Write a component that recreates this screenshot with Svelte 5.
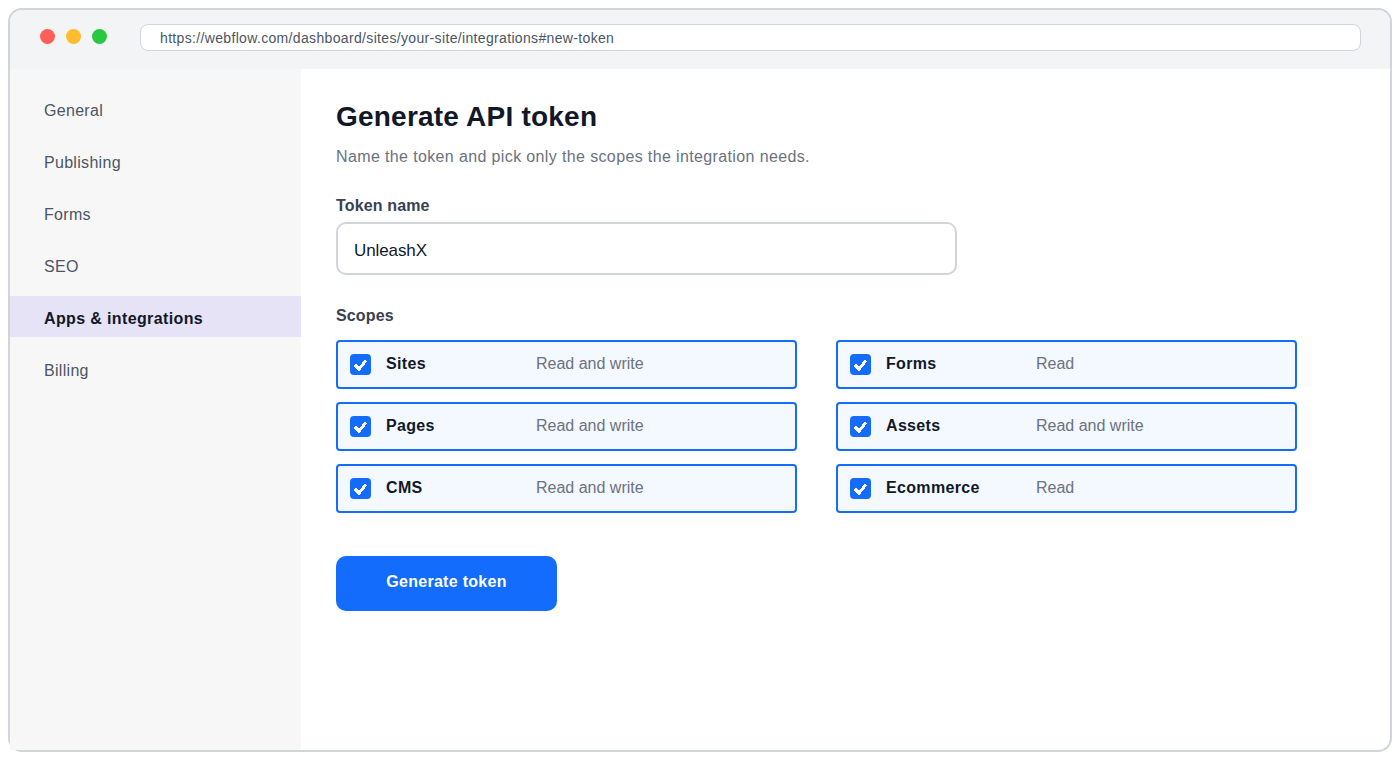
<script>
  const nav = ['General', 'Publishing', 'Forms', 'SEO', 'Apps & integrations', 'Billing'];
  const scopes = [
    ['Sites', 'Read and write'], ['Forms', 'Read'],
    ['Pages', 'Read and write'], ['Assets', 'Read and write'],
    ['CMS', 'Read and write'], ['Ecommerce', 'Read']
  ];
</script>

<div class="page">
  <div class="window">
    <header class="bar">
      <div class="dots">
        <span class="dot red"></span><span class="dot amber"></span><span class="dot green"></span>
      </div>
      <div class="url">https://webflow.com/dashboard/sites/your-site/integrations#new-token</div>
    </header>
    <div class="body">
      <nav class="side">
        {#each nav as item}
          <div class="nav" class:active={item === 'Apps & integrations'}>{item}</div>
        {/each}
      </nav>
      <main class="main">
        <h1>Generate API token</h1>
        <p class="sub">Name the token and pick only the scopes the integration needs.</p>
        <div class="label">Token name</div>
        <div class="input">UnleashX</div>
        <div class="label scopes-label">Scopes</div>
        <div class="grid">
          {#each scopes as [name, access]}
            <div class="scope">
              <span class="check">
                <svg viewBox="0 0 21 21" width="21" height="21" aria-hidden="true">
                  <path d="M5 11 9 15 16 6.5" fill="none" stroke="#fff" stroke-width="3" shape-rendering="crispEdges"/>
                </svg>
              </span>
              <span class="name">{name}</span>
              <span class="access">{access}</span>
            </div>
          {/each}
        </div>
        <button class="btn">Generate token</button>
      </main>
    </div>
  </div>
</div>

<style>
  :global(body) { margin: 0; background: #fff; font-family: "Liberation Sans", Arial, sans-serif; }
  .page { width: 1400px; height: 760px; padding: 8px; box-sizing: border-box; }
  .window {
    width: 1384px; height: 744px; box-sizing: border-box;
    border: 2px solid #d1d5db; border-radius: 14px;
    display: flex; flex-direction: column; background: #fff;
  }
  .bar {
    height: 59px; flex: none; background: #f3f4f6; border-radius: 12px 12px 0 0;
    display: flex; align-items: flex-start; padding: 14px 29px 0 30px; box-sizing: border-box;
  }
  .dots { display: flex; gap: 11px; margin: 5px 33px 0 0; }
  .dot { width: 15px; height: 15px; border-radius: 50%; }
  .red { background: #ff5f57; }
  .amber { background: #febc2e; }
  .green { background: #28c840; }
  .url {
    flex: 1; height: 27px; box-sizing: border-box;
    background: #fff; border: 1px solid #d1d5db; border-radius: 8px;
    padding: 0 19px; font-size: 14px; line-height: 26px; color: #4b5563; letter-spacing: 0.34px;
  }
  .body { flex: 1; display: flex; min-height: 0; }
  .side { width: 291px; flex: none; background: #f7f7f8; padding-top: 19px; box-sizing: border-box; }
  .nav { height: 41px; line-height: 45px; margin-bottom: 11px; padding-left: 34px; font-size: 16px; color: #4b5563; letter-spacing: 0.3px; }
  .nav.active { background: #e6e3f6; color: #111827; font-weight: 700; letter-spacing: 0.37px; }
  .main { flex: 1; padding: 30px 35px; }
  h1 { margin: 0; font-size: 28px; line-height: 36px; font-weight: 700; color: #111827; letter-spacing: 0.22px; }
  .sub { margin: 10px 0 0; font-size: 16px; line-height: 24px; color: #6b7280; letter-spacing: 0.37px; }
  .label { margin-top: 27px; font-size: 16px; line-height: 20px; font-weight: 700; color: #374151; letter-spacing: 0.15px; }
  .input {
    margin-top: 6px; width: 621px; height: 53px; box-sizing: border-box;
    border: 2px solid #d1d5db; border-radius: 10px;
    padding: 0 16px; line-height: 53px; font-size: 17px; color: #111827; letter-spacing: -0.1px;
  }
  .scopes-label { margin-top: 31px; }
  .grid { margin-top: 14px; display: grid; grid-template-columns: 461px 461px; column-gap: 39px; row-gap: 13px; }
  .scope {
    height: 49px; box-sizing: border-box; display: flex; align-items: center;
    border: 2px solid #136cfb; border-radius: 4px; background: #f4f8ff; padding-left: 12px;
  }
  .check { width: 21px; height: 21px; border-radius: 4px; background: #136cfb; flex: none; margin-right: 15px; display: block; }
  .check svg { display: block; }
  .name { width: 150px; flex: none; padding-bottom: 2px; font-size: 16px; font-weight: 700; color: #111827; letter-spacing: 0.33px; }
  .access { padding-bottom: 2px; font-size: 16px; color: #6b7280; }
  .btn {
    display: block; margin-top: 43px; width: 221px; height: 55px; border: 0; border-radius: 10px; padding: 0 0 4px;
    background: #136cfb; color: #fff; font: 700 16px "Liberation Sans", sans-serif; letter-spacing: 0.28px;
  }
</style>
